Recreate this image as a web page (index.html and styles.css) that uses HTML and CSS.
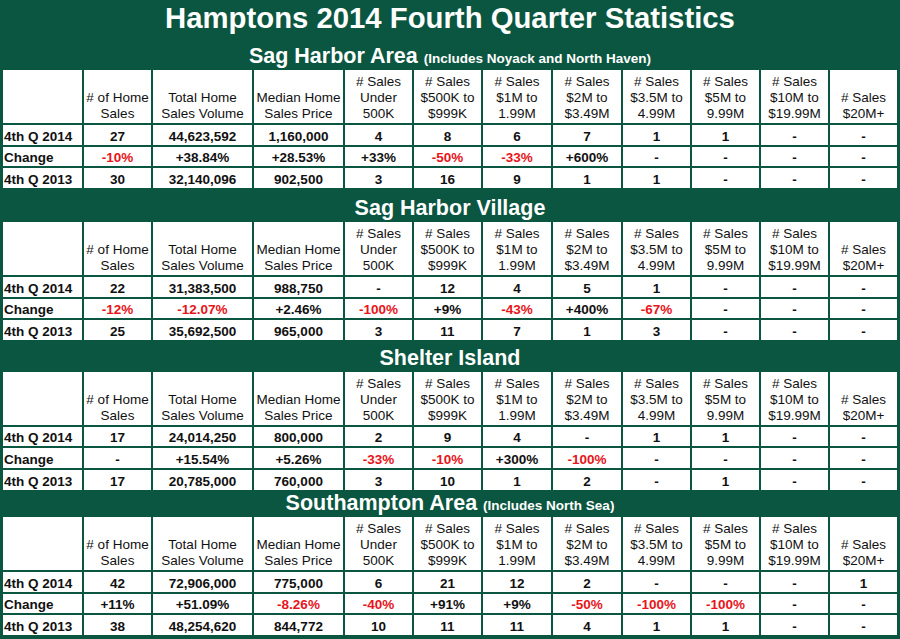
FILE: index.html
```html
<!DOCTYPE html>
<html>
<head>
<meta charset="utf-8">
<link rel="stylesheet" href="styles.css">
</head>
<body>
<div class="sheet">
  <section class="sec">
    <div class="band band-top">
      <div class="title">Hamptons 2014 Fourth Quarter Statistics</div>
      <div class="sub">Sag Harbor Area <small>(Includes Noyack and North Haven)</small></div>
    </div>
    <div class="grid rows-a">
      <div class="h"></div>
      <div class="h"># of Home<br>Sales</div>
      <div class="h">Total Home<br>Sales Volume</div>
      <div class="h">Median Home<br>Sales Price</div>
      <div class="h"># Sales<br>Under<br>500K</div>
      <div class="h"># Sales<br>$500K to<br>$999K</div>
      <div class="h"># Sales<br>$1M to<br>1.99M</div>
      <div class="h"># Sales<br>$2M to<br>$3.49M</div>
      <div class="h"># Sales<br>$3.5M to<br>4.99M</div>
      <div class="h"># Sales<br>$5M to<br>9.99M</div>
      <div class="h"># Sales<br>$10M to<br>$19.99M</div>
      <div class="h"># Sales<br>$20M+</div>

      <div class="c lbl">4th Q 2014</div><div class="c">27</div><div class="c">44,623,592</div><div class="c">1,160,000</div><div class="c">4</div><div class="c">8</div><div class="c">6</div><div class="c">7</div><div class="c">1</div><div class="c">1</div><div class="c">-</div><div class="c">-</div>
      <div class="c lbl">Change</div><div class="c neg">-10%</div><div class="c">+38.84%</div><div class="c">+28.53%</div><div class="c">+33%</div><div class="c neg">-50%</div><div class="c neg">-33%</div><div class="c">+600%</div><div class="c">-</div><div class="c">-</div><div class="c">-</div><div class="c">-</div>
      <div class="c lbl">4th Q 2013</div><div class="c">30</div><div class="c">32,140,096</div><div class="c">902,500</div><div class="c">3</div><div class="c">16</div><div class="c">9</div><div class="c">1</div><div class="c">1</div><div class="c">-</div><div class="c">-</div><div class="c">-</div>
    </div>
  </section>

  <section class="sec">
    <div class="band band-2"><div class="sub">Sag Harbor Village</div></div>
    <div class="grid rows-a">
      <div class="h"></div>
      <div class="h"># of Home<br>Sales</div>
      <div class="h">Total Home<br>Sales Volume</div>
      <div class="h">Median Home<br>Sales Price</div>
      <div class="h"># Sales<br>Under<br>500K</div>
      <div class="h"># Sales<br>$500K to<br>$999K</div>
      <div class="h"># Sales<br>$1M to<br>1.99M</div>
      <div class="h"># Sales<br>$2M to<br>$3.49M</div>
      <div class="h"># Sales<br>$3.5M to<br>4.99M</div>
      <div class="h"># Sales<br>$5M to<br>9.99M</div>
      <div class="h"># Sales<br>$10M to<br>$19.99M</div>
      <div class="h"># Sales<br>$20M+</div>

      <div class="c lbl">4th Q 2014</div><div class="c">22</div><div class="c">31,383,500</div><div class="c">988,750</div><div class="c">-</div><div class="c">12</div><div class="c">4</div><div class="c">5</div><div class="c">1</div><div class="c">-</div><div class="c">-</div><div class="c">-</div>
      <div class="c lbl">Change</div><div class="c neg">-12%</div><div class="c neg">-12.07%</div><div class="c">+2.46%</div><div class="c neg">-100%</div><div class="c">+9%</div><div class="c neg">-43%</div><div class="c">+400%</div><div class="c neg">-67%</div><div class="c">-</div><div class="c">-</div><div class="c">-</div>
      <div class="c lbl">4th Q 2013</div><div class="c">25</div><div class="c">35,692,500</div><div class="c">965,000</div><div class="c">3</div><div class="c">11</div><div class="c">7</div><div class="c">1</div><div class="c">3</div><div class="c">-</div><div class="c">-</div><div class="c">-</div>
    </div>
  </section>

  <section class="sec">
    <div class="band band-3"><div class="sub">Shelter Island</div></div>
    <div class="grid rows-b">
      <div class="h"></div>
      <div class="h"># of Home<br>Sales</div>
      <div class="h">Total Home<br>Sales Volume</div>
      <div class="h">Median Home<br>Sales Price</div>
      <div class="h"># Sales<br>Under<br>500K</div>
      <div class="h"># Sales<br>$500K to<br>$999K</div>
      <div class="h"># Sales<br>$1M to<br>1.99M</div>
      <div class="h"># Sales<br>$2M to<br>$3.49M</div>
      <div class="h"># Sales<br>$3.5M to<br>4.99M</div>
      <div class="h"># Sales<br>$5M to<br>9.99M</div>
      <div class="h"># Sales<br>$10M to<br>$19.99M</div>
      <div class="h"># Sales<br>$20M+</div>

      <div class="c lbl">4th Q 2014</div><div class="c">17</div><div class="c">24,014,250</div><div class="c">800,000</div><div class="c">2</div><div class="c">9</div><div class="c">4</div><div class="c">-</div><div class="c">1</div><div class="c">1</div><div class="c">-</div><div class="c">-</div>
      <div class="c lbl">Change</div><div class="c">-</div><div class="c">+15.54%</div><div class="c">+5.26%</div><div class="c neg">-33%</div><div class="c neg">-10%</div><div class="c">+300%</div><div class="c neg">-100%</div><div class="c">-</div><div class="c">-</div><div class="c">-</div><div class="c">-</div>
      <div class="c lbl">4th Q 2013</div><div class="c">17</div><div class="c">20,785,000</div><div class="c">760,000</div><div class="c">3</div><div class="c">10</div><div class="c">1</div><div class="c">2</div><div class="c">-</div><div class="c">1</div><div class="c">-</div><div class="c">-</div>
    </div>
  </section>

  <section class="sec">
    <div class="band band-4"><div class="sub">Southampton Area <small>(Includes North Sea)</small></div></div>
    <div class="grid rows-a">
      <div class="h"></div>
      <div class="h"># of Home<br>Sales</div>
      <div class="h">Total Home<br>Sales Volume</div>
      <div class="h">Median Home<br>Sales Price</div>
      <div class="h"># Sales<br>Under<br>500K</div>
      <div class="h"># Sales<br>$500K to<br>$999K</div>
      <div class="h"># Sales<br>$1M to<br>1.99M</div>
      <div class="h"># Sales<br>$2M to<br>$3.49M</div>
      <div class="h"># Sales<br>$3.5M to<br>4.99M</div>
      <div class="h"># Sales<br>$5M to<br>9.99M</div>
      <div class="h"># Sales<br>$10M to<br>$19.99M</div>
      <div class="h"># Sales<br>$20M+</div>

      <div class="c lbl">4th Q 2014</div><div class="c">42</div><div class="c">72,906,000</div><div class="c">775,000</div><div class="c">6</div><div class="c">21</div><div class="c">12</div><div class="c">2</div><div class="c">-</div><div class="c">-</div><div class="c">-</div><div class="c">1</div>
      <div class="c lbl">Change</div><div class="c">+11%</div><div class="c">+51.09%</div><div class="c neg">-8.26%</div><div class="c neg">-40%</div><div class="c">+91%</div><div class="c">+9%</div><div class="c neg">-50%</div><div class="c neg">-100%</div><div class="c neg">-100%</div><div class="c">-</div><div class="c">-</div>
      <div class="c lbl">4th Q 2013</div><div class="c">38</div><div class="c">48,254,620</div><div class="c">844,772</div><div class="c">10</div><div class="c">11</div><div class="c">11</div><div class="c">4</div><div class="c">1</div><div class="c">1</div><div class="c">-</div><div class="c">-</div>
    </div>
  </section>
</div>
</body>
</html>
```

FILE: styles.css
```css
html, body {
  margin: 0;
  padding: 0;
  background: #0b5640;
}

.sheet {
  width: 900px;
  height: 639px;
  box-sizing: border-box;
  padding: 0 1px 4px 1px;
  background: #0b5640;
  font-family: "Liberation Sans", Arial, sans-serif;
  color: #111;
  overflow: hidden;
}

.band {
  color: #fff;
  font-weight: bold;
  text-align: center;
  box-sizing: border-box;
}

.title {
  height: 44px;
  box-sizing: border-box;
  padding-top: 2px;
  font-size: 29.3px;
  line-height: 32px;
}

.sub {
  font-size: 21.5px;
  line-height: 24px;
}

.sub small {
  font-size: 13.5px;
}

.band-top { height: 70px; }
.band-top .sub { height: 26px; }
.band-2 { height: 34px; padding-top: 8px; }
.band-3 { height: 32px; padding-top: 6px; }
.band-4 { height: 27px; padding-top: 1px; }

.grid {
  display: grid;
  grid-template-columns: 79px 67px 99px 89px 67px 67px 68px 68px 67px 67px 67px 67px;
  gap: 2px;
  padding: 0 2px;
}

.rows-a { grid-template-rows: 53px 20px 19px 20px; }
.rows-b { grid-template-rows: 53px 19px 20px 20px; }

.h, .c {
  background: #fff;
  display: flex;
  flex-direction: column;
  justify-content: flex-end;
  align-items: center;
  text-align: center;
  font-size: 13.5px;
  white-space: nowrap;
  overflow: hidden;
}

.h {
  line-height: 16px;
  padding-bottom: 1px;
  box-sizing: border-box;
}

.c {
  font-weight: bold;
  line-height: 15px;
  padding-bottom: 1px;
  box-sizing: border-box;
}

.c.lbl {
  align-items: flex-start;
  padding-left: 1px;
}

.c.neg {
  color: #e8141a;
}
```
